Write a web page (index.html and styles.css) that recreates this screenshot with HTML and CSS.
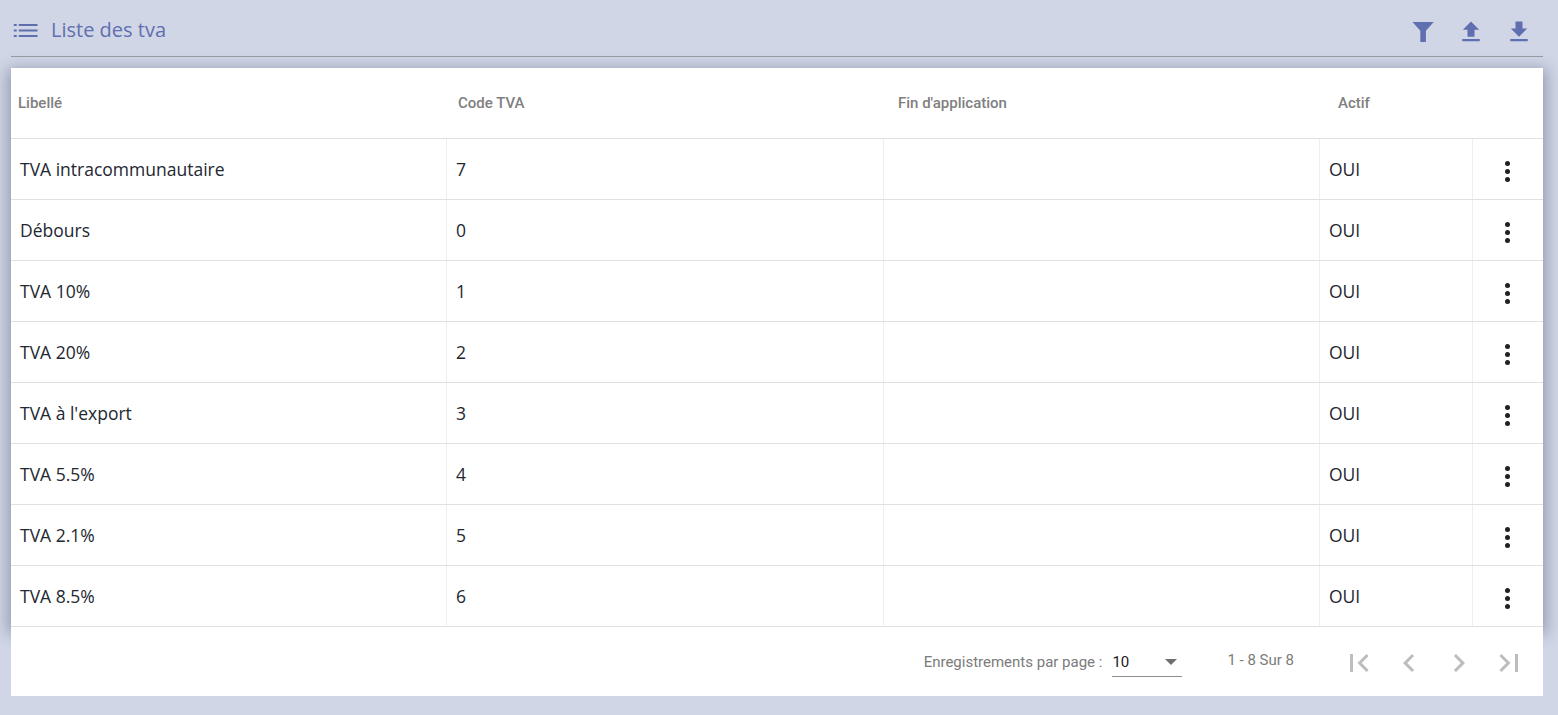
FILE: index.html
```html
<!DOCTYPE html>
<html lang="fr">
<head>
<meta charset="utf-8">
<title>Liste des tva</title>
<link rel="stylesheet" href="styles.css">
</head>
<body>
<header class="topbar">
  <div class="topbar-title">
    <svg class="list-icon" viewBox="0 0 24 24"><path d="M3 8h2.400v1.600H3zM3 12.400h2.400V14H3zM3 16.800h2.400v1.600H3zM7 8h15v1.600H7zM7 12.400h15V14H7zM7 16.800h15v1.600H7z"/></svg>
    <h1>Liste des tva</h1>
  </div>
  <div class="topbar-actions">
    <svg class="action" viewBox="0 0 24 24"><path d="M3 3.400H21.200L14.500 11V20.600H9.700V11z"/></svg>
    <svg class="action" viewBox="0 0 24 24"><path d="M9 16h6v-6h4l-7-7-7 7h4zM4.500 18h15v2h-15z"/></svg>
    <svg class="action" viewBox="0 0 24 24"><path d="M19 9h-4V3H9v6H5l7 7zM4.500 18h15v2h-15z"/></svg>
  </div>
</header>
<main class="card">
  <div class="table-wrap">
    <div class="row head">
      <div class="cell">Libellé</div>
      <div class="cell">Code TVA</div>
      <div class="cell">Fin d'application</div>
      <div class="cell">Actif</div>
      <div class="cell"></div>
    </div>
    <div class="row"><div class="cell">TVA intracommunautaire</div><div class="cell">7</div><div class="cell"></div><div class="cell">OUI</div><div class="cell menu"><span class="dots"><i></i><i></i><i></i></span></div></div>
    <div class="row"><div class="cell">Débours</div><div class="cell">0</div><div class="cell"></div><div class="cell">OUI</div><div class="cell menu"><span class="dots"><i></i><i></i><i></i></span></div></div>
    <div class="row"><div class="cell">TVA 10%</div><div class="cell">1</div><div class="cell"></div><div class="cell">OUI</div><div class="cell menu"><span class="dots"><i></i><i></i><i></i></span></div></div>
    <div class="row"><div class="cell">TVA 20%</div><div class="cell">2</div><div class="cell"></div><div class="cell">OUI</div><div class="cell menu"><span class="dots"><i></i><i></i><i></i></span></div></div>
    <div class="row"><div class="cell">TVA à l'export</div><div class="cell">3</div><div class="cell"></div><div class="cell">OUI</div><div class="cell menu"><span class="dots"><i></i><i></i><i></i></span></div></div>
    <div class="row"><div class="cell">TVA 5.5%</div><div class="cell">4</div><div class="cell"></div><div class="cell">OUI</div><div class="cell menu"><span class="dots"><i></i><i></i><i></i></span></div></div>
    <div class="row"><div class="cell">TVA 2.1%</div><div class="cell">5</div><div class="cell"></div><div class="cell">OUI</div><div class="cell menu"><span class="dots"><i></i><i></i><i></i></span></div></div>
    <div class="row"><div class="cell">TVA 8.5%</div><div class="cell">6</div><div class="cell"></div><div class="cell">OUI</div><div class="cell menu"><span class="dots"><i></i><i></i><i></i></span></div></div>
  </div>
  <footer class="pager">
    <span class="pager-label">Enregistrements par page :</span>
    <div class="select"><span>10</span><b class="caret"></b></div>
    <span class="range">1 - 8 Sur 8</span>
    <div class="pager-nav">
      <svg viewBox="0 0 24 24"><path d="M18.410 16.590L13.820 12l4.590-4.590L17 6l-6 6 6 6zM6 6h2v12H6z"/></svg>
      <svg viewBox="0 0 24 24"><path d="M15.410 7.410L14 6l-6 6 6 6 1.410-1.410L10.830 12z"/></svg>
      <svg viewBox="0 0 24 24"><path d="M10 6L8.590 7.410 13.170 12l-4.580 4.590L10 18l6-6z"/></svg>
      <svg viewBox="0 0 24 24"><path d="M5.590 7.410L10.180 12l-4.590 4.590L7 18l6-6-6-6zM16 6h2v12h-2z"/></svg>
    </div>
  </footer>
</main>
</body>
</html>
```
FILE: styles.css
```css
html, body { margin: 0; height: 100%; }
body {
  background: #d0d6e6;
  font-family: Roboto, "Liberation Sans", sans-serif;
  padding: 0 15px 0 11px;
  height: 715px;
  box-sizing: border-box;
  overflow: hidden;
}
.topbar {
  height: 56px;
  border-bottom: 1px solid #9a9ca4;
  display: flex;
  align-items: center;
  justify-content: space-between;
}
.topbar-title { display: flex; align-items: center; gap: 10px; padding-top: 2px; }
.list-icon { width: 30px; height: 30px; fill: #5f6fae; margin-right: 1px; margin-left: -1px; }
h1 {
  margin: 0;
  font: 400 20px "Open Sans", sans-serif;
  color: #5f6fb0;
}
.topbar-actions { display: flex; gap: 20px; margin-right: 10px; padding-top: 8px; }
.action { width: 28px; height: 28px; fill: #5f6fb0; }
.card {
  margin-top: 11px;
  background: #fff;
  height: 628px;
  display: flex;
  flex-direction: column;
}
.table-wrap { box-shadow: 0 4px 14px 3px rgba(60, 70, 100, .42); background: #fff; }
.row {
  display: grid;
  grid-template-columns: 436px 437px 436px 153px 70px;
  height: 61px;
  border-bottom: 1px solid #e0e0e0;
  box-sizing: border-box;
  font: 400 17.5px "Open Sans", sans-serif;
  color: #232730;
}
.row.head {
  height: 71px;
  font: 500 15px Roboto, sans-serif;
  color: #808080;
}
.cell {
  display: flex;
  align-items: center;
  padding-left: 9px;
  border-right: 1px solid #eeeeee;
  box-sizing: border-box;
}
.cell:last-child { border-right: 0; }
.head .cell { border-right: 0; padding-left: 7px; padding-bottom: 1px; }
.head .cell:nth-child(2) { padding-left: 11px; }
.head .cell:nth-child(3) { padding-left: 14px; }
.head .cell:nth-child(4) { padding-left: 18px; }
.menu { justify-content: center; padding-left: 0; padding-right: 1px; }
.dots { display: flex; flex-direction: column; gap: 3px; padding-top: 4px; }
.dots i { width: 5px; height: 5px; border-radius: 50%; background: #212121; display: block; }
.pager {
  flex: 1;
  position: relative;
  background: #fff;
  display: flex;
  align-items: center;
  justify-content: flex-end;
  font-size: 15px;
  color: #7b7b7b;
  padding-right: 16px;
}
.pager-label { margin-right: 10px; }
.select {
  width: 70px;
  height: 30px;
  border-bottom: 1px solid #8c8c8c;
  display: flex;
  align-items: center;
  justify-content: space-between;
  box-sizing: border-box;
  color: #212121;
  padding-right: 5px;
  margin-top: 1px;
}
.caret { width: 0; height: 0; border: 6px solid transparent; border-top-color: #6e6e6e; border-bottom: 0; }
.range { margin-left: 45px; margin-right: 47px; margin-top: -3px; }
.pager-nav { display: flex; gap: 14px; margin-top: 2px; }
.pager-nav svg { width: 36px; height: 36px; fill: #bdbdbd; }
```
